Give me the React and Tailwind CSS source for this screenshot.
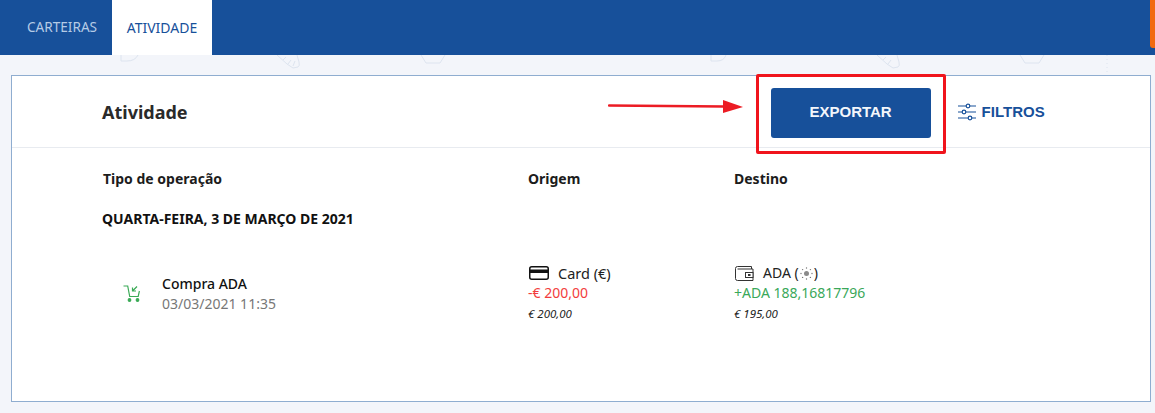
import React from 'react';

const sans = 'font-["Noto_Sans","Open_Sans",sans-serif]';

function Doodles() {
  // faint background pattern, only a sliver shows between header and card
  return (
    <svg className="absolute left-0 top-[55px] w-[1155px] h-[20px]" viewBox="0 0 1155 20" fill="none" stroke="#dde4ef" strokeWidth="1">
      <path d="M121 0v6h6q8 0 11-6" />
      <path d="M277 0l10 9 6 4 5-1q2-1 1-5l-2-7M283 5l3-3M288 9l3-4M293 11l2-5" />
      <path d="M421 0l5 8h14l5-8" />
      <path d="M711 0v6h6q7 0 9-6" />
      <path d="M877 0l10 9 6 4 5-1q2-1 1-5l-2-7M883 5l3-3M888 9l3-4" />
      <path d="M1020 0l5 8h14l5-8" />
      <path d="M1107 0v20" strokeDasharray="1 3" />
    </svg>
  );
}

function FilterIcon() {
  return (
    <svg width="18" height="18" viewBox="0 0 18 18" fill="none" stroke="#17509a" strokeWidth="1.2">
      <path d="M0 3h8M12 3h6M0 9h4M8 9h10M0 15h10M14 15h4" />
      <circle cx="10" cy="3" r="1.8" />
      <circle cx="6" cy="9" r="1.8" />
      <circle cx="12" cy="15" r="1.8" />
    </svg>
  );
}

function CartIcon() {
  return (
    <svg width="18" height="18" viewBox="0 0 18 18" fill="none" stroke="#3aaa56" strokeWidth="1.2">
      <path d="M0.5 1h4.2l2 10.5h8.5l1.2-5.5" />
      <path d="M14 1.5l-4.5 4.5M9.5 2.5V6H13" />
      <circle cx="6.5" cy="15" r="1.3" fill="#3aaa56" />
      <circle cx="14.5" cy="15" r="1.3" fill="#3aaa56" />
    </svg>
  );
}

function CardIcon() {
  return (
    <svg width="20" height="14" viewBox="0 0 20 14" fill="none" className="ml-[1px]">
      <rect x="0.75" y="0.75" width="18.5" height="12.5" rx="2" stroke="#111" strokeWidth="1.5" />
      <rect x="1" y="3.5" width="18" height="3.5" fill="#111" />
    </svg>
  );
}

function WalletIcon() {
  return (
    <svg width="19" height="15" viewBox="0 0 19 15" fill="none" stroke="#333" strokeWidth="1" className="ml-[1px]">
      <path d="M16.5 3V0.5H2.5Q0.5 0.5 0.5 2.5v10q0 2 2 2h15.5V3H2.5" />
      <rect x="10.5" y="6.5" width="7.5" height="5" fill="#fff" />
      <rect x="13" y="8" width="2.5" height="2" fill="#333" stroke="none" />
    </svg>
  );
}

function AdaIcon() {
  return (
    <svg width="13" height="13" viewBox="0 0 13 13" fill="#777" className="inline-block">
      <circle cx="6.5" cy="6.5" r="2.5" fill="#8a8a8a" />
      <circle cx="6.5" cy="1" r="0.7" />
      <circle cx="6.5" cy="12" r="0.7" />
      <circle cx="1" cy="6.5" r="0.7" />
      <circle cx="12" cy="6.5" r="0.7" />
      <circle cx="2.6" cy="2.6" r="0.7" />
      <circle cx="10.4" cy="2.6" r="0.7" />
      <circle cx="2.6" cy="10.4" r="0.7" />
      <circle cx="10.4" cy="10.4" r="0.7" />
    </svg>
  );
}

export default function App() {
  return (
    <div className={`relative w-[1155px] h-[413px] overflow-hidden bg-[#f3f5fa] ${sans}`}>
      <header className="flex h-[55px] items-stretch bg-[#17509a] pl-[14px]">
        <div className="flex w-[98px] items-center justify-center pr-[2px] text-[13.6px] text-[#b5cbe6]">CARTEIRAS</div>
        <div className="flex w-[100px] items-center justify-center bg-white text-[14px] text-[#17509a]">ATIVIDADE</div>
      </header>
      <Doodles />
      <div className="absolute right-0 top-0 h-[48px] w-[5px] rounded-bl-[3px] bg-[#f26a0f]" />

      <main className="relative ml-[11px] mt-[20px] h-[327px] w-[1140px] border border-[#8fadd0] bg-white">
        <div className="flex h-[72px] items-center border-b border-[#e8ebf0] pl-[90px] pt-[1px]">
          <h1 className="text-[18px] font-bold text-[#2a2a2a]">Atividade</h1>
          <button className="ml-[583px] mt-[1px] h-[50px] w-[160px] rounded-[3px] bg-[#17509a] font-['Liberation_Sans',sans-serif] text-[15px] font-bold text-[#f3f6fb]">
            EXPORTAR
          </button>
          <div className="ml-[27px] flex items-center gap-[6px]">
            <FilterIcon />
            <span className="font-['Liberation_Sans',sans-serif] text-[15px] font-bold text-[#17509a]">FILTROS</span>
          </div>
        </div>

        <div className="grid grid-cols-[425px_206px_1fr] pl-[91px] pt-[21px] text-[14px] font-bold leading-[20px] text-[#1c1c1c]">
          <div>Tipo de operação</div>
          <div>Origem</div>
          <div>Destino</div>
        </div>
        <div className="pl-[90px] pt-[20px] text-[14px] font-bold leading-[20px] text-[#111]">QUARTA-FEIRA, 3 DE MARÇO DE 2021</div>

        <div className="grid grid-cols-[425px_206px_1fr] pl-[91px] pt-[34px]">
          <div className="flex items-center pl-[20px]">
            <CartIcon />
            <div className="ml-[21px] text-[14px] leading-[20px]">
              <div className="font-medium text-[#111]">Compra ADA</div>
              <div className="text-[#777]">03/03/2021 11:35</div>
            </div>
          </div>
          <div className="text-[14px] leading-[20px]">
            <div className="flex items-center gap-[9px] text-[14.5px] text-[#222]"><CardIcon />Card (€)</div>
            <div className="text-[#f23c3c]">-€ 200,00</div>
            <div className="mt-[1px] text-[11.5px] italic leading-[20px] text-[#222]">€ 200,00</div>
          </div>
          <div className="text-[14px] leading-[20px]">
            <div className="flex items-center gap-[9px] text-[#222]">
              <WalletIcon />
              <span className="flex items-center gap-[1px]">ADA (<AdaIcon />)</span>
            </div>
            <div className="text-[#3aa85a]">+ADA 188,16817796</div>
            <div className="mt-[1px] text-[11.5px] italic leading-[20px] text-[#222]">€ 195,00</div>
          </div>
        </div>
      </main>

      {/* annotation drawn over the screenshot */}
      <div className="absolute left-[756px] top-[74px] h-[80px] w-[190px] rounded-[2px] border-[3px] border-[#f0141c]" />
      <svg className="absolute left-[608px] top-[98px]" width="136" height="18" viewBox="0 0 136 18">
        <path d="M1 7.5L116 8.5" stroke="#ec1c24" strokeWidth="2.5" strokeLinecap="round" />
        <path d="M115 2L135 9L115 15Z" fill="#ec1c24" />
      </svg>
    </div>
  );
}
